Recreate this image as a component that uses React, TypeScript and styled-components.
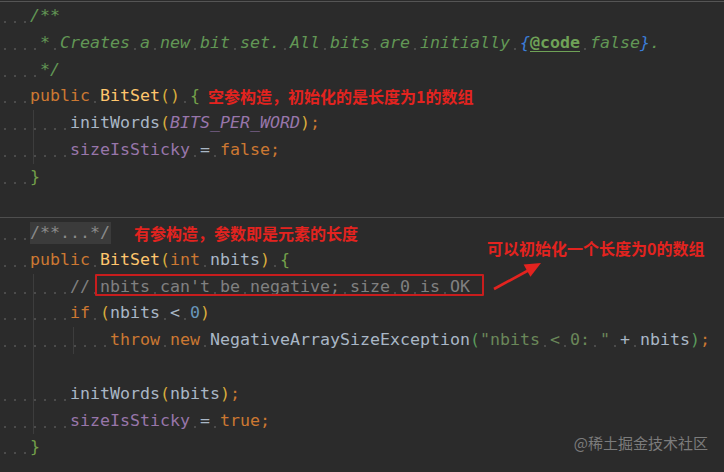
import React from "react";
import styled, { createGlobalStyle } from "styled-components";

const Global = createGlobalStyle`
  html, body { margin: 0; padding: 0; background: #2b2b2b; }
`;

const C = {
  text: "#a9b7c6",
  kw: "#cc7832",
  fn: "#ffc66d",
  doc: "#629755",
  docTag: "#6fa257",
  docBrace: "#3b7dd8",
  cmt: "#808080",
  num: "#6897bb",
  str: "#6a8759",
  field: "#9876aa",
  paren: "#d9ad3c",
  paren2: "#5a9a5c",
  brace: "#73a04a",
  fold: "#8a8a8a",
};

type Kind = keyof typeof C;

const LH = 26.8;

const Editor = styled.div`
  position: relative;
  width: 724px;
  height: 472px;
  overflow: hidden;
  background: #2b2b2b;
  padding-top: 1px;
  box-sizing: border-box;
  font-family: "DejaVu Sans Mono", monospace;
  font-size: 16.61px;
  color: ${C.text};
`;

const Section = styled.section<{ $top: number; $first?: boolean }>`
  display: flex;
  flex-direction: column;
  padding-top: ${(p) => p.$top}px;
  border-top: 1px solid ${(p) => (p.$first ? "#555555" : "#4e4e4e")};
`;

const Line = styled.div`
  height: ${LH}px;
  line-height: ${LH}px;
  white-space: pre;
`;

const dot = `radial-gradient(circle at 5px 19px, #4c4c4c 0 0.7px, transparent 1.15px)`;

const Indent = styled.span<{ $n: number; $guides?: number[]; $bare?: boolean }>`
  display: inline-block;
  vertical-align: top;
  width: ${(p) => p.$n * 10}px;
  height: ${LH}px;
  background-image: ${(p) =>
    [...(p.$guides || []).map(() => "linear-gradient(#3d3d3d, #3d3d3d)"), p.$bare ? "none" : dot].join(", ")};
  background-size: ${(p) => [...(p.$guides || []).map(() => "1px 100%"), "10px 100%"].join(", ")};
  background-position: ${(p) => [...(p.$guides || []).map((g) => `${g}px 0`), "0 0"].join(", ")};
  background-repeat: ${(p) => [...(p.$guides || []).map(() => "no-repeat"), "repeat-x"].join(", ")};
`;

const Sp = styled.span`
  display: inline-block;
  vertical-align: top;
  width: 10px;
  height: ${LH}px;
  background-image: ${dot};
  background-repeat: no-repeat;
`;

const Tok = styled.span<{ $k: Kind; $i?: boolean; $b?: boolean; $u?: boolean }>`
  color: ${(p) => C[p.$k]};
  font-style: ${(p) => (p.$i ? "italic" : "normal")};
  font-weight: ${(p) => (p.$b ? "bold" : "normal")};
  text-decoration: ${(p) => (p.$u ? "underline" : "none")};
  text-underline-offset: 3px;
`;

const Fold = styled.span`
  display: inline-block;
  vertical-align: top;
  margin-top: 2.5px;
  height: 22px;
  line-height: 22px;
  background: #3b3b3b;
  color: ${C.fold};
  padding-right: 1px;
`;

const Boxed = styled.span`
  position: relative;
  color: ${C.cmt};
  &::before {
    content: "";
    position: absolute;
    left: -5px;
    right: -14px;
    top: -3px;
    bottom: 0px;
    border: 2px solid #c81d1d;
    border-radius: 1px;
  }
`;

const Annot = styled.span<{ $ml: number }>`
  display: inline-block;
  vertical-align: top;
  margin-left: ${(p) => p.$ml}px;
  font-family: "Noto Sans CJK SC", sans-serif;
  font-weight: bold;
  font-size: 16px;
  color: #e3231f;
  white-space: nowrap;
`;

const FloatNote = styled.div`
  position: absolute;
  left: 487px;
  top: 237px;
  line-height: 22px;
  font-family: "Noto Sans CJK SC", sans-serif;
  font-weight: bold;
  font-size: 16px;
  color: #e3231f;
  white-space: nowrap;
`;

const Arrow = styled.svg`
  position: absolute;
  left: 488px;
  top: 258px;
`;

const Watermark = styled.div`
  position: absolute;
  right: 16px;
  top: 432px;
  line-height: 22px;
  font-family: "Noto Sans CJK SC", sans-serif;
  font-size: 15px;
  color: #7c7c7c;
`;

function T({ k, s, i, b, u }: { k: Kind; s: string; i?: boolean; b?: boolean; u?: boolean }) {
  const parts = s.split(" ");
  return (
    <Tok $k={k} $i={i} $b={b} $u={u}>
      {parts.map((p, idx) => (
        <React.Fragment key={idx}>
          {idx > 0 && <Sp />}
          {p}
        </React.Fragment>
      ))}
    </Tok>
  );
}

export default function App() {
  return (
    <>
      <Global />
      <Editor>
        <Section $top={1} $first>
          <Line>
            <Indent $n={3} />
            <T k="doc" i s="/**" />
          </Line>
          <Line>
            <Indent $n={4} />
            <T k="doc" i s="* Creates a new bit set. All bits are initially " />
            <T k="docBrace" i s="{" />
            <T k="docTag" b u s="@code" />
            <T k="doc" i s=" false" />
            <T k="docBrace" i s="}" />
            <T k="doc" i s="." />
          </Line>
          <Line>
            <Indent $n={4} />
            <T k="doc" i s="*/" />
          </Line>
          <Line>
            <Indent $n={3} />
            <T k="kw" s="public" />
            <Sp />
            <T k="fn" s="BitSet" />
            <T k="paren" s="()" />
            <Sp />
            <T k="brace" s="{" />
            <Annot $ml={8}>空参构造，初始化的是长度为1的数组</Annot>
          </Line>
          <Line>
            <Indent $n={7} $guides={[33]} />
            <T k="text" s="initWords" />
            <T k="paren" s="(" />
            <T k="field" i s="BITS_PER_WORD" />
            <T k="paren" s=")" />
            <T k="kw" s=";" />
          </Line>
          <Line>
            <Indent $n={7} $guides={[33]} />
            <T k="field" s="sizeIsSticky" />
            <Sp />
            <T k="text" s="=" />
            <Sp />
            <T k="kw" s="false;" />
          </Line>
          <Line>
            <Indent $n={3} />
            <T k="brace" s="}" />
          </Line>
          <Line />
        </Section>
        <Section $top={1.6}>
          <Line>
            <Indent $n={3} />
            <Fold>/**...*/</Fold>
            <Annot $ml={23}>有参构造，参数即是元素的长度</Annot>
          </Line>
          <Line>
            <Indent $n={3} />
            <T k="kw" s="public" />
            <Sp />
            <T k="fn" s="BitSet" />
            <T k="paren" s="(" />
            <T k="kw" s="int" />
            <Sp />
            <T k="text" s="nbits" />
            <T k="paren" s=")" />
            <Sp />
            <T k="brace" s="{" />
          </Line>
          <Line>
            <Indent $n={7} $guides={[33]} />
            <T k="cmt" s="//" />
            <Sp />
            <Boxed>
              <T k="cmt" s="nbits can't be negative; size 0 is OK" />
            </Boxed>
          </Line>
          <Line>
            <Indent $n={7} $guides={[33]} />
            <T k="kw" s="if" />
            <Sp />
            <T k="paren" s="(" />
            <T k="text" s="nbits" />
            <Sp />
            <T k="text" s="<" />
            <Sp />
            <T k="num" s="0" />
            <T k="paren" s=")" />
          </Line>
          <Line>
            <Indent $n={11} $guides={[33, 73]} />
            <T k="kw" s="throw" />
            <Sp />
            <T k="kw" s="new" />
            <Sp />
            <T k="text" s="NegativeArraySizeException" />
            <T k="paren2" s="(" />
            <T k="str" s={'"nbits < 0: "'} />
            <Sp />
            <T k="text" s="+" />
            <Sp />
            <T k="text" s="nbits" />
            <T k="paren2" s=")" />
            <T k="kw" s=";" />
          </Line>
          <Line>
            <Indent $n={4} $guides={[33]} $bare />
          </Line>
          <Line>
            <Indent $n={7} $guides={[33]} />
            <T k="text" s="initWords" />
            <T k="paren" s="(" />
            <T k="text" s="nbits" />
            <T k="paren" s=")" />
            <T k="kw" s=";" />
          </Line>
          <Line>
            <Indent $n={7} $guides={[33]} />
            <T k="field" s="sizeIsSticky" />
            <Sp />
            <T k="text" s="=" />
            <Sp />
            <T k="kw" s="true;" />
          </Line>
          <Line>
            <Indent $n={3} />
            <T k="brace" s="}" />
          </Line>
        </Section>
        <FloatNote>可以初始化一个长度为0的数组</FloatNote>
        <Arrow width="60" height="36" viewBox="0 0 60 36">
          <line x1="6" y1="31" x2="41" y2="12" stroke="#e3231f" strokeWidth="2.6" />
          <polygon points="53,5 42.4,18.8 35.6,6.6" fill="#e3231f" />
        </Arrow>
        <Watermark>@稀土掘金技术社区</Watermark>
      </Editor>
    </>
  );
}
